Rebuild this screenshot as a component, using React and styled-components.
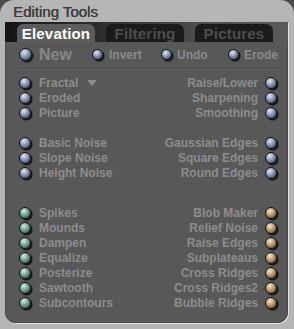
import React from "react";
import styled, { createGlobalStyle } from "styled-components";

const Global = createGlobalStyle`
  html, body { margin: 0; padding: 0; background: #4c4c4c; }
  body { font-family: "Liberation Sans", Arial, sans-serif; }
`;

const Window = styled.div`
  width: 294px;
  height: 329px;
  box-sizing: border-box;
  background: #b5b5b5;
  border-radius: 14px 14px 0 0;
  display: flex;
  flex-direction: column;
  overflow: hidden;
`;

const Title = styled.div`
  height: 22px;
  box-sizing: border-box;
  padding: 1px 0 0 13px;
  line-height: 21px;
  font-size: 15px;
  color: #3e3e3e;
  text-shadow: 0.4px 0 0 #3e3e3e;
`;

const Panel = styled.div`
  margin: 0 6px 6px 5px;
  flex: 1;
  background: #585858;
  border-radius: 0 0 11px 11px;
  box-shadow: inset 0 0 0 1px #4a4a4a, 1px 1px 0 #e2e2e2;
  display: flex;
  flex-direction: column;
  overflow: hidden;
`;

const TabBar = styled.div`
  height: 20px;
  box-sizing: border-box;
  display: flex;
  align-items: flex-end;
  gap: 11px;
  padding-left: 12px;
  background: linear-gradient(to right, #141414 0%, #2e2e2e 35%, #4e4e4e 70%, #5a5a5a 100%);
`;

const Tab = styled.div`
  width: 78px;
  height: 18px;
  box-sizing: border-box;
  padding-top: 1px;
  border-radius: 6px 7px 0 0;
  text-align: center;
  font-size: 15px;
  font-weight: bold;
  line-height: 18px;
  letter-spacing: 0.2px;
  background: ${(p) => (p.$active ? "#5c5c5c" : "#1b1b1b")};
  color: ${(p) => (p.$active ? "#ffffff" : "#4e4e4e")};
`;

const TopRow = styled.div`
  margin-top: 4px;
  height: 17px;
  display: grid;
  grid-template-columns: 73px 69px 67px 1fr;
  padding-left: 14px;
  align-items: center;
`;

const Item = styled.div`
  display: flex;
  align-items: center;
  gap: ${(p) => p.$gap || 6}px;
  justify-content: ${(p) => (p.$right ? "flex-end" : "flex-start")};
  height: ${(p) => p.$h || 15}px;
`;

const BigLabel = styled.span`
  font-size: 16px;
  font-weight: bold;
  color: #878787;
`;

const SmallLabel = styled.span`
  font-size: 12px;
  font-weight: bold;
  color: #8a8a8a;
`;

const Label = styled.span`
  font-size: 12px;
  font-weight: bold;
  color: #8c8c8c;
  white-space: nowrap;
`;

const palettes = {
  blue: ["#dfe8f5", "#7f8fad", "#323c50"],
  green: ["#d6f0e4", "#6b9c89", "#2a473d"],
  tan: ["#f8e6c4", "#b6946a", "#533d25"],
};

const Ball = styled.span`
  flex: none;
  width: ${(p) => p.$size}px;
  height: ${(p) => p.$size}px;
  box-sizing: border-box;
  border-radius: 50%;
  border: 1px solid #121212;
  background: ${(p) => {
    const [hi, mid, lo] = palettes[p.$color || "blue"];
    return `radial-gradient(circle at 38% 30%, ${hi} 0%, ${mid} 48%, ${lo} 100%)`;
  }};
  box-shadow: 1.5px 1.5px 1px rgba(0, 0, 0, 0.8);
`;

const Separator = styled.div`
  margin: 5px 8px 0 13px;
  height: 0;
  border-top: 1px solid #4b4b4b;
  border-bottom: 1px solid #666666;
`;

const Section = styled.div`
  margin-top: ${(p) => p.$mt}px;
  display: grid;
  grid-template-columns: 1fr 1fr;
  padding: 0 11px 0 14px;
`;

const Column = styled.div`
  display: flex;
  flex-direction: column;
`;

const Arrow = styled.span`
  width: 0;
  height: 0;
  margin-left: 1px;
  border-left: 5px solid transparent;
  border-right: 5px solid transparent;
  border-top: 6px solid #8c8c8c;
`;

const LeftItem = ({ label, color, arrow }) => (
  <Item $gap={8}>
    <Ball $size={12} $color={color} />
    <Label>{label}</Label>
    {arrow && <Arrow />}
  </Item>
);

const RightItem = ({ label, color }) => (
  <Item $gap={7} $right>
    <Label>{label}</Label>
    <Ball $size={12} $color={color} />
  </Item>
);

const groups = [
  {
    mt: 5,
    color: "blue",
    right: "blue",
    left: ["Fractal", "Eroded", "Picture"],
    rightItems: ["Raise/Lower", "Sharpening", "Smoothing"],
  },
  {
    mt: 15,
    color: "blue",
    right: "blue",
    left: ["Basic Noise", "Slope Noise", "Height Noise"],
    rightItems: ["Gaussian Edges", "Square Edges", "Round Edges"],
  },
  {
    mt: 25,
    color: "green",
    right: "tan",
    left: ["Spikes", "Mounds", "Dampen", "Equalize", "Posterize", "Sawtooth", "Subcontours"],
    rightItems: ["Blob Maker", "Relief Noise", "Raise Edges", "Subplateaus", "Cross Ridges", "Cross Ridges2", "Bubble Ridges"],
  },
];

export default function App() {
  return (
    <>
      <Global />
      <Window>
        <Title>Editing Tools</Title>
        <Panel>
          <TabBar>
            <Tab $active>Elevation</Tab>
            <Tab>Filtering</Tab>
            <Tab>Pictures</Tab>
          </TabBar>
          <TopRow>
            <Item $gap={7} $h={17}>
              <Ball $size={13} />
              <BigLabel>New</BigLabel>
            </Item>
            <Item $gap={6} $h={17}>
              <Ball $size={11} />
              <SmallLabel>Invert</SmallLabel>
            </Item>
            <Item $gap={5} $h={17}>
              <Ball $size={11} />
              <SmallLabel>Undo</SmallLabel>
            </Item>
            <Item $gap={5} $h={17}>
              <Ball $size={11} />
              <SmallLabel>Erode</SmallLabel>
            </Item>
          </TopRow>
          <Separator />
          {groups.map((g, gi) => (
            <Section key={gi} $mt={g.mt}>
              <Column>
                {g.left.map((l, i) => (
                  <LeftItem key={l} label={l} color={g.color} arrow={gi === 0 && i === 0} />
                ))}
              </Column>
              <Column>
                {g.rightItems.map((l) => (
                  <RightItem key={l} label={l} color={g.right} />
                ))}
              </Column>
            </Section>
          ))}
        </Panel>
      </Window>
    </>
  );
}
